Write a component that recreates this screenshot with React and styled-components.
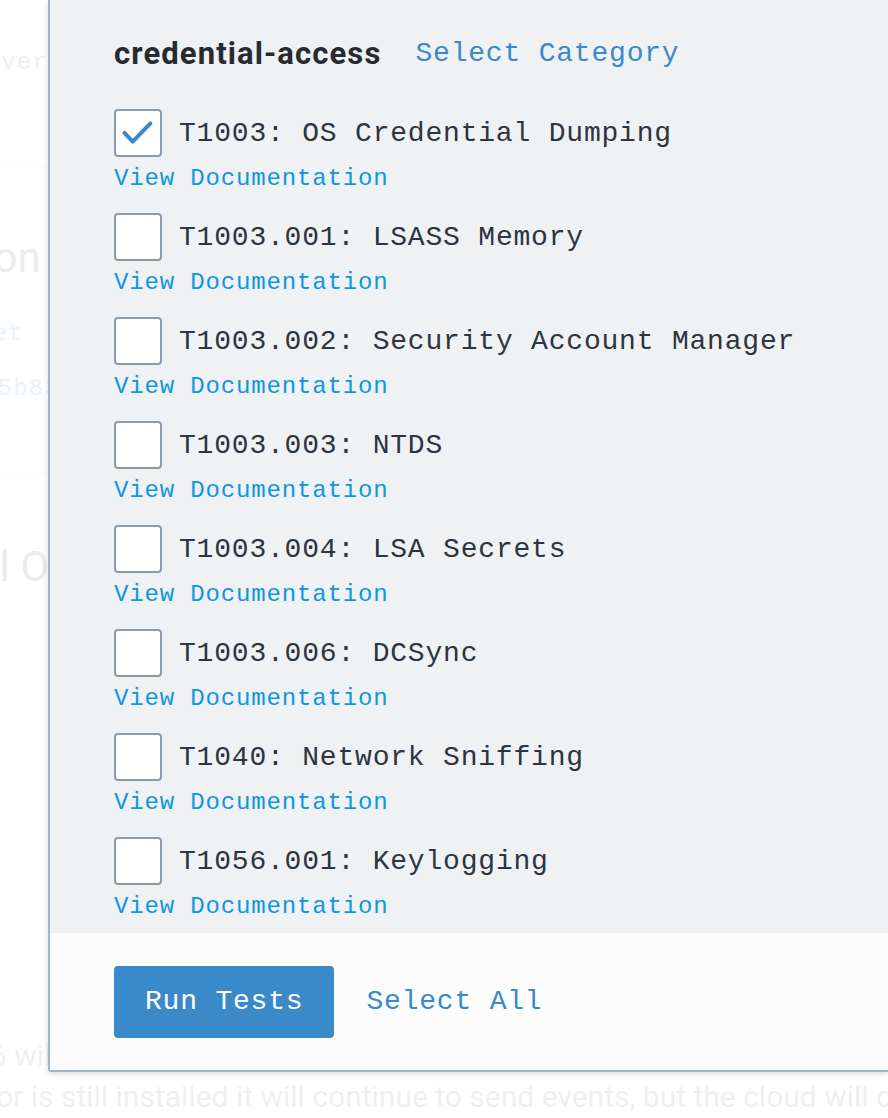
import React from "react";
import styled, { createGlobalStyle } from "styled-components";

const Global = createGlobalStyle`
  html, body { margin: 0; padding: 0; background: #ffffff; overflow: hidden; }
  * { box-sizing: border-box; }
  #root { position: relative; width: 888px; height: 1118px; overflow: hidden; }
`;

const MONO = `"Liberation Mono", "DejaVu Sans Mono", monospace`;
const SANS = `Roboto, "Noto Sans", Arial, sans-serif`;

/* ---------- page behind the drawer ---------- */
const Page = styled.div`
  position: relative;
  width: 100%;
  height: 100%;
  display: flex;
  flex-direction: column;
  font-family: ${SANS};
`;

const Row = styled.div`
  height: ${(p) => p.h}px;
  border-bottom: ${(p) => (p.line ? "2px solid #e4e6e9" : "none")};
  display: flex;
  flex-direction: column;
  justify-content: ${(p) => p.justify || "center"};
  padding-top: ${(p) => p.pt || 0}px;
  overflow: hidden;
  white-space: nowrap;
`;

const Spacer = styled.div`
  height: ${(p) => p.h}px;
  border-bottom: ${(p) => (p.line ? "2px solid #e4e6e9" : "none")};
`;

const BgText = styled.div`
  font-family: ${(p) => (p.mono ? MONO : SANS)};
  font-size: ${(p) => p.size}px;
  line-height: ${(p) => p.lh || p.size * 1.3}px;
  letter-spacing: ${(p) => (p.mono ? "0.05em" : "0")};
  color: ${(p) => p.color || "#2b2f36"};
  margin-left: ${(p) => p.shift || 0}px;
  margin-top: ${(p) => p.mt || 0}px;
  white-space: nowrap;
`;

const Accent = styled.span`
  color: #d9743c;
`;

const Veil = styled.div`
  position: absolute;
  inset: 0;
  background: rgba(255, 255, 255, 0.89);
`;

/* ---------- drawer ---------- */
const Drawer = styled.aside`
  position: absolute;
  top: 0;
  left: 48px;
  right: 0;
  height: 1072px;
  display: flex;
  flex-direction: column;
  border-left: 2px solid #a6b3c0;
  border-bottom: 2px solid #a6b3c0;
  border-bottom-left-radius: 3px;
  box-shadow: 0 2px 6px rgba(60, 80, 100, 0.18);
  overflow: hidden;
`;

const Body = styled.div`
  flex: 1;
  background: #f0f1f3;
  padding: 34px 0 10px 64px;
  display: flex;
  flex-direction: column;
`;

const HeaderLine = styled.div`
  display: flex;
  align-items: center;
  gap: 34px;
  height: 40px;
  margin-bottom: 35px;
`;

const Heading = styled.h2`
  margin: 0;
  font-family: ${SANS};
  font-weight: 700;
  font-size: 31px;
  letter-spacing: 1.1px;
  color: #272b31;
  line-height: 40px;
`;

const LinkText = styled.a`
  font-family: ${MONO};
  font-size: ${(p) => p.size || 28}px;
  letter-spacing: ${(p) => (p.size === 24 ? "0.85px" : "0.8px")};
  color: ${(p) => p.color || "#3a89c9"};
  text-decoration: none;
  cursor: pointer;
  line-height: ${(p) => p.lh || 40}px;
`;

const List = styled.ul`
  list-style: none;
  margin: 0;
  padding: 0;
  display: flex;
  flex-direction: column;
  gap: 18px;
`;

const Item = styled.li`
  display: flex;
  flex-direction: column;
  gap: 6px;
`;

const CheckRow = styled.label`
  display: flex;
  align-items: center;
  gap: 17px;
  height: 48px;
  cursor: pointer;
`;

const Box = styled.span`
  width: 48px;
  height: 48px;
  flex: none;
  border: 2px solid #8c9cae;
  border-radius: 4px;
  background: #ffffff;
  display: flex;
  align-items: center;
  justify-content: center;
`;

const Label = styled.span`
  font-family: ${MONO};
  font-size: 28px;
  letter-spacing: 0.8px;
  color: #2c3541;
  white-space: nowrap;
`;

const Footer = styled.div`
  height: 137px;
  flex: none;
  background: #fcfcfc;
  padding: 0 0 0 64px;
  display: flex;
  align-items: center;
  gap: 32px;
`;

const Button = styled.button`
  height: 72px;
  padding: 0 31px;
  border: none;
  border-radius: 4px;
  background: #3a89c9;
  color: #ffffff;
  font-family: ${MONO};
  font-size: 28px;
  letter-spacing: 0.8px;
  cursor: pointer;
`;

const Check = () => (
  <svg width="48" height="48" viewBox="0 0 48 48" style={{ marginLeft: -2, marginTop: -2 }}>
    <path
      d="M11 25 L19.5 34 L38 15"
      fill="none"
      stroke="#3a89c9"
      strokeWidth="4.2"
      strokeLinecap="round"
      strokeLinejoin="round"
    />
  </svg>
);

const techniques = [
  { id: "T1003", name: "OS Credential Dumping", checked: true },
  { id: "T1003.001", name: "LSASS Memory" },
  { id: "T1003.002", name: "Security Account Manager" },
  { id: "T1003.003", name: "NTDS" },
  { id: "T1003.004", name: "LSA Secrets" },
  { id: "T1003.006", name: "DCSync" },
  { id: "T1040", name: "Network Sniffing" },
  { id: "T1056.001", name: "Keylogging" },
];

export default function App() {
  return (
    <>
      <Global />
      <Page>
        <Spacer h={25} line />
        <Row h={78} line>
          <BgText mono size={24} shift={-30} color="#5d6670">
            Never
          </BgText>
        </Row>
        <Spacer h={65} line />
        <Row h={306} line justify="flex-start" pt={63}>
          <BgText size={42} shift={-172} color="#4a5058">
            Description
          </BgText>
          <BgText mono size={24} lh={34} mt={32} shift={-70} color="#3a89c9">
            Target
          </BgText>
          <BgText mono size={24} lh={34} mt={21} shift={-18} color="#3a89c9">
            45b83c09e1
          </BgText>
        </Row>
        <Row h={419} line justify="flex-start" pt={66}>
          <BgText size={42} shift={-84} color="#4a5058">
            Total Objects
          </BgText>
        </Row>
        <Row h={226} justify="flex-start" pt={144}>
          <BgText size={30} lh={40} shift={-10} color="#6a7078">
            <Accent>6</Accent> will be retired
          </BgText>
          <BgText size={30} lh={40} mt={1} shift={-4} color="#6a7078">
            or is still installed it will continue to send events, but the cloud will drop them
          </BgText>
        </Row>
        <Veil />
      </Page>

      <Drawer>
        <Body>
          <HeaderLine>
            <Heading>credential-access</Heading>
            <LinkText>Select Category</LinkText>
          </HeaderLine>
          <List>
            {techniques.map((t) => (
              <Item key={t.id}>
                <CheckRow>
                  <Box>{t.checked && <Check />}</Box>
                  <Label>
                    {t.id}: {t.name}
                  </Label>
                </CheckRow>
                <LinkText size={24} lh={32} color="#0c97e2">
                  View Documentation
                </LinkText>
              </Item>
            ))}
          </List>
        </Body>
        <Footer>
          <Button>Run Tests</Button>
          <LinkText>Select All</LinkText>
        </Footer>
      </Drawer>
    </>
  );
}
